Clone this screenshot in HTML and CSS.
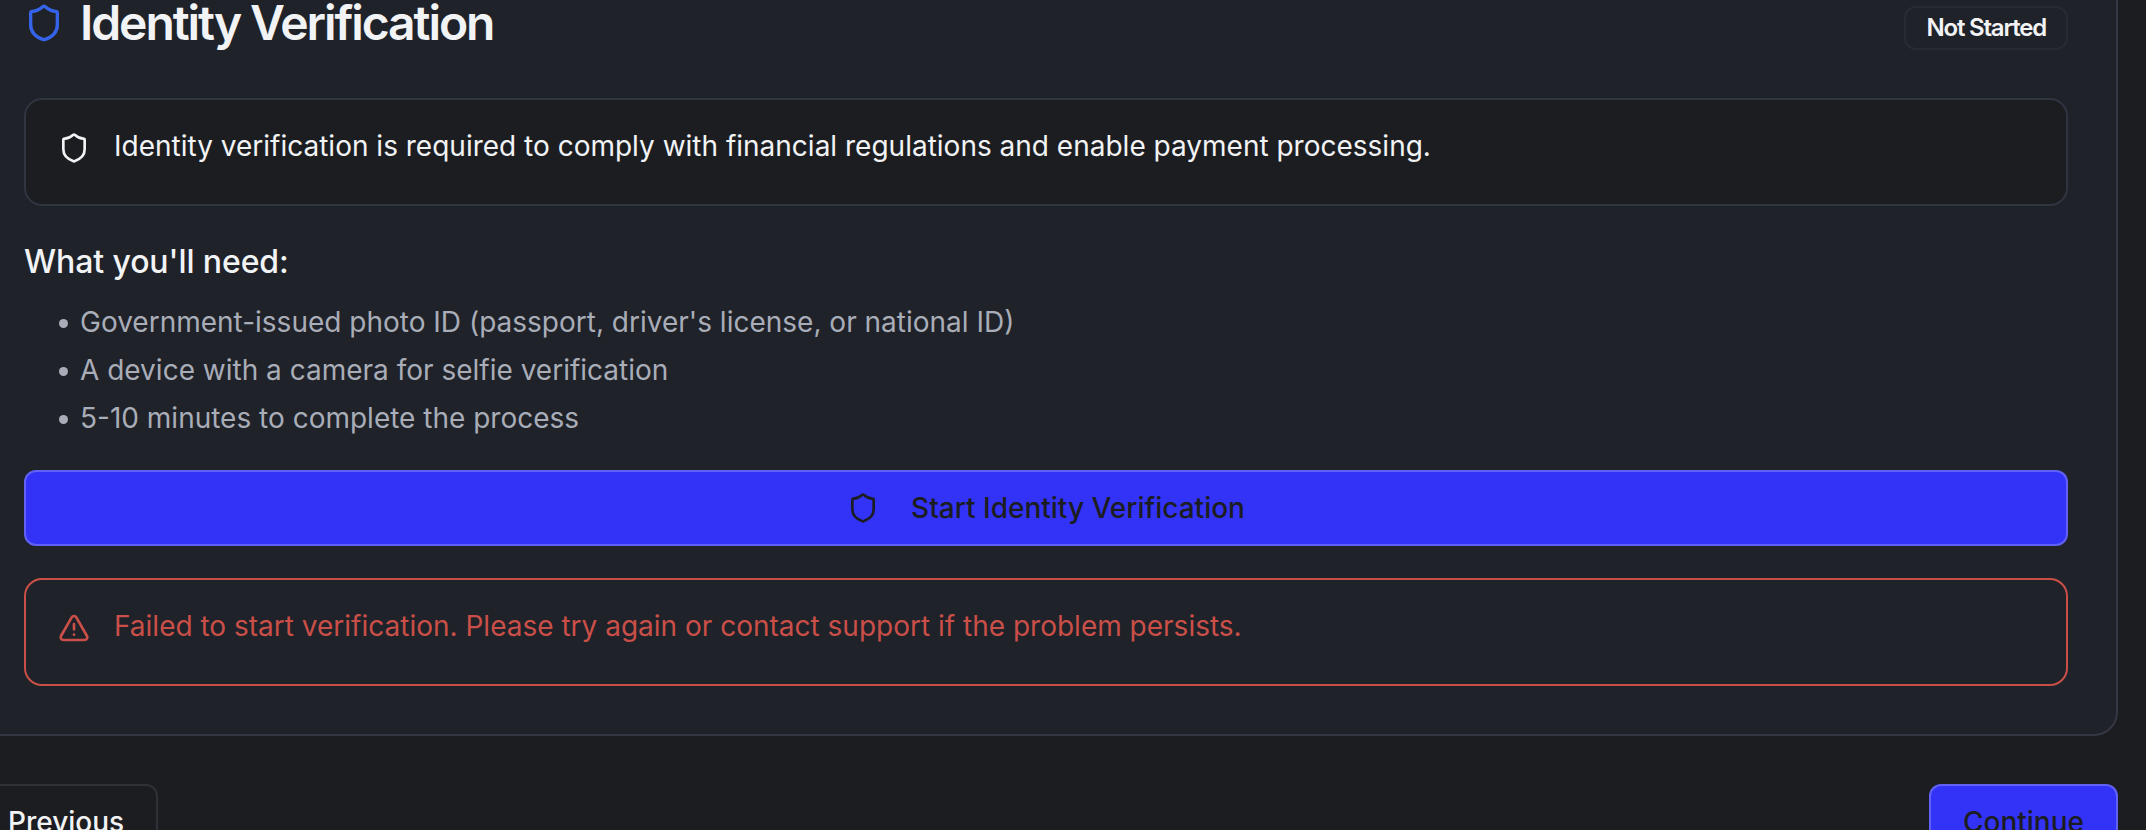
FILE: index.html
```html
<!DOCTYPE html>
<html lang="en">
<head>
<meta charset="utf-8">
<title>Identity Verification</title>
<link rel="stylesheet" href="styles.css">
</head>
<body>
<svg class="sprite" aria-hidden="true">
  <symbol id="shield" viewBox="0 0 24 24"><path d="M20 13c0 5-3.5 7.5-7.66 8.95a1 1 0 0 1-.67-.01C7.5 20.5 4 18 4 13V6a1 1 0 0 1 1-1c2 0 4.5-1.2 6.24-2.72a1.17 1.17 0 0 1 1.52 0C14.51 3.81 17 5 19 5a1 1 0 0 1 1 1z"/></symbol>
  <symbol id="warning" viewBox="0 0 24 24"><path d="m21.73 18-8-14a2 2 0 0 0-3.48 0l-8 14A2 2 0 0 0 4 21h16a2 2 0 0 0 1.73-3"/><path d="M12 9v4"/><path d="M12 17h.01"/></symbol>
</svg>
<main class="page">
  <section class="card">
    <header class="card-header">
      <h1 class="title"><svg class="icon icon-lg"><use href="#shield"/></svg><span>Identity Verification</span></h1>
      <span class="badge">Not Started</span>
    </header>
    <div class="alert">
      <svg class="icon"><use href="#shield"/></svg>
      <p class="alert-text">Identity verification is required to comply with financial regulations and enable payment processing.</p>
    </div>
    <div class="needs">
      <h2 class="needs-title">What you'll need:</h2>
      <ul class="needs-list">
        <li>Government-issued photo ID (passport, driver's license, or national ID)</li>
        <li>A device with a camera for selfie verification</li>
        <li>5-10 minutes to complete the process</li>
      </ul>
    </div>
    <button class="btn btn-primary btn-start"><svg class="icon"><use href="#shield"/></svg><span>Start Identity Verification</span></button>
    <div class="alert alert-error">
      <svg class="icon"><use href="#warning"/></svg>
      <p class="alert-text">Failed to start verification. Please try again or contact support if the problem persists.</p>
    </div>
  </section>
  <nav class="steps">
    <button class="btn btn-outline">Previous</button>
    <button class="btn btn-primary">Continue</button>
  </nav>
</main>
</body>
</html>
```
FILE: styles.css
```css
* { box-sizing: border-box; margin: 0; padding: 0; }
body {
  height: 830px;
  overflow: hidden;
  background: #1c1d21;
  color: #f2f3f5;
  font-family: Inter, "Liberation Sans", sans-serif;
  font-size: 28px;
  line-height: 40px;
}
.sprite { display: none; }
.page { width: 2144px; height: 830px; margin-left: -26px; overflow: hidden; }
.card {
  display: flex;
  flex-direction: column;
  height: 736px;
  padding: 0 48px 48px;
  border: 2px solid #343844;
  border-top: 0;
  border-radius: 0 0 24px 24px;
  background: #1f2229;
}
.card-header {
  display: flex;
  justify-content: space-between;
  align-items: flex-start;
  height: 98px;
}
.title {
  display: flex;
  align-items: center;
  gap: 16px;
  height: 46px;
  font-size: 48px;
  line-height: 60px;
  font-weight: 600;
  letter-spacing: -2.08px;
}
.icon {
  flex: none;
  width: 32px;
  height: 32px;
  fill: none;
  stroke: currentColor;
  stroke-width: 2;
  stroke-linecap: round;
  stroke-linejoin: round;
}
.icon-lg { width: 40px; height: 40px; color: #3563e9; }
.badge {
  margin-top: 6px;
  height: 44px;
  padding: 4px 20px;
  border: 2px solid #292b32;
  border-radius: 12px;
  font-size: 24px;
  line-height: 32px;
  font-weight: 600;
  letter-spacing: -1.2px;
}
.alert {
  display: flex;
  gap: 24px;
  height: 108px;
  padding: 32px;
  border: 2px solid #303440;
  border-radius: 18px;
  background: #1c1d21;
}
.alert-text { margin-top: -6px; }
.alert-error { border-color: #c94f48; background: transparent; color: #c94f48; }
.needs { padding: 32px 0; height: 264px; }
.needs-title { font-size: 32px; line-height: 48px; font-weight: 500; letter-spacing: -0.1px; }
.needs-list {
  display: grid;
  gap: 8px;
  margin-top: 16px;
  padding-left: 35px;
  list-style: none;
  color: #a9adb8;
}
.needs-list li { display: flex; align-items: center; gap: 12px; }
.needs-list li::before {
  content: "";
  width: 9px;
  height: 9px;
  margin-top: 2px;
  border-radius: 50%;
  background: currentColor;
}
.btn {
  display: flex;
  align-items: center;
  justify-content: center;
  gap: 32px;
  height: 76px;
  padding: 0 32px;
  border: 2px solid;
  border-radius: 12px;
  font: inherit;
  font-weight: 500;
}
.btn-primary { border-color: #6161f5; background: #3333f7; color: #1c1d21; }
.btn-outline { border-color: #303136; background: transparent; color: #f2f3f5; }
.btn-start { margin-bottom: 32px; }
.steps { display: flex; justify-content: space-between; margin-top: 48px; }
```
